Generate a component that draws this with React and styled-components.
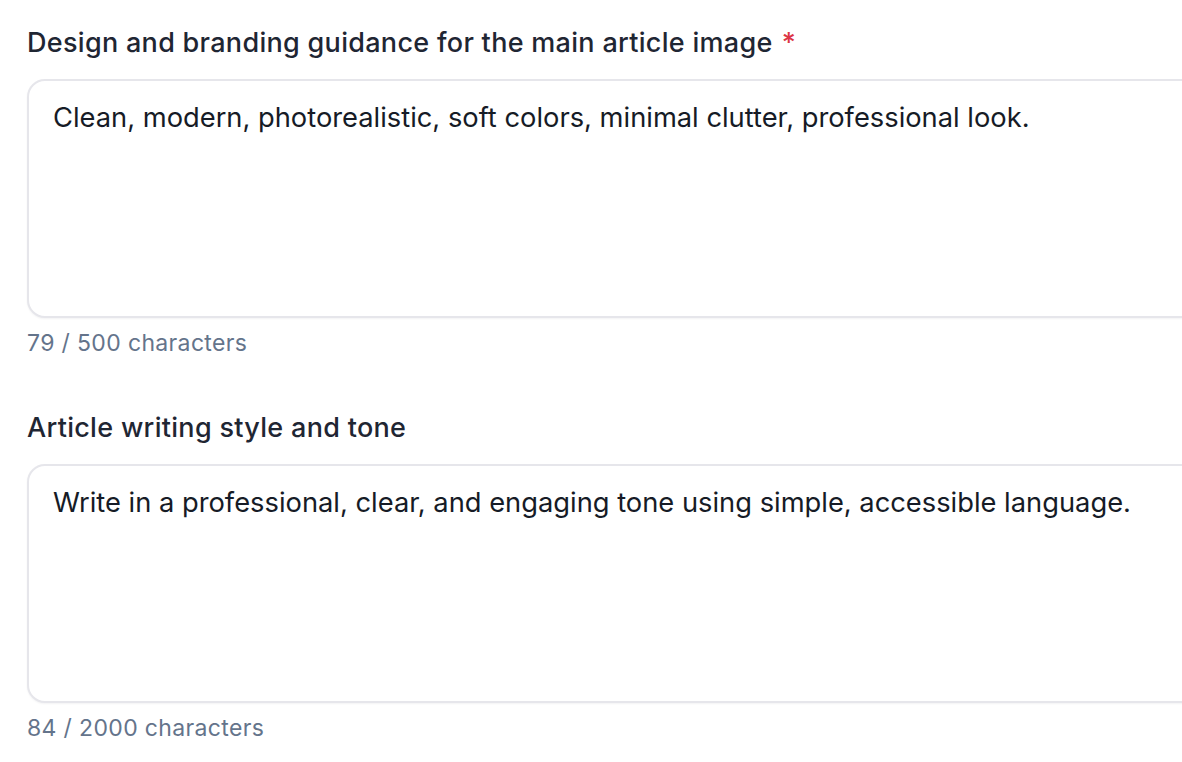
import React from "react";
import styled, { createGlobalStyle } from "styled-components";

const Global = createGlobalStyle`
  html, body { margin: 0; padding: 0; background: #ffffff; overflow: hidden; }
  body { font-family: Inter, "Noto Sans", sans-serif; -webkit-font-smoothing: antialiased; }
`;

const Page = styled.div`
  width: 1182px;
  height: 762px;
  overflow: hidden;
`;

const Form = styled.div`
  width: 1240px;
  padding: 24px 0 0 27px;
  display: flex;
  flex-direction: column;
  gap: 50px;
`;

const Field = styled.div`
  display: flex;
  flex-direction: column;
`;

const Label = styled.label`
  font-size: 27px;
  font-weight: 500;
  line-height: 38px;
  color: #1f2633;
  letter-spacing: 0.3px;
  margin-bottom: 17px;
`;

const Required = styled.span`
  color: #dc3545;
  margin-left: 9px;
`;

const TextArea = styled.textarea`
  box-sizing: border-box;
  width: 100%;
  height: ${(p) => p.$h}px;
  border: 2px solid #e6e6eb;
  border-radius: 18px;
  padding: 19px 24px;
  font-family: Inter, "Noto Sans", sans-serif;
  font-size: 27.3px;
  line-height: 36px;
  color: #161b26;
  resize: none;
  outline: none;
  box-shadow: 0 1px 2px rgba(16, 24, 40, 0.05);
  background: #fff;
`;

const Counter = styled.div`
  margin-top: 9px;
  font-size: 23px;
  letter-spacing: 0.35px;
  line-height: 32px;
  color: #64748b;
`;

export default function App() {
  return (
    <Page>
      <Global />
      <Form>
        <Field>
          <Label>
            Design and branding guidance for the main article image
            <Required>*</Required>
          </Label>
          <TextArea
            $h={239}
            defaultValue="Clean, modern, photorealistic, soft colors, minimal clutter, professional look."
          />
          <Counter>79 / 500 characters</Counter>
        </Field>
        <Field>
          <Label>Article writing style and tone</Label>
          <TextArea
            $h={239}
            defaultValue="Write in a professional, clear, and engaging tone using simple, accessible language."
          />
          <Counter>84 / 2000 characters</Counter>
        </Field>
      </Form>
    </Page>
  );
}
